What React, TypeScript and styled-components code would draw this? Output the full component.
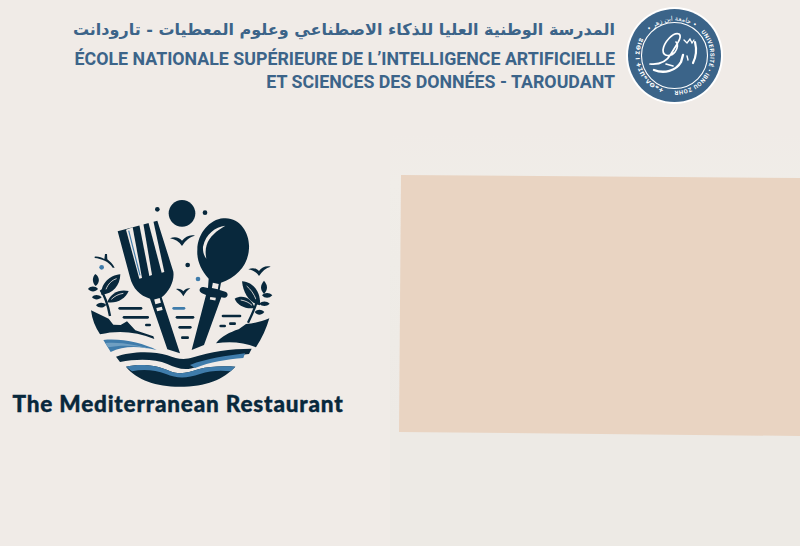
import React from "react";
import styled, { createGlobalStyle } from "styled-components";

const Global = createGlobalStyle`
  html, body { margin: 0; padding: 0; background: #f0ebe7; }
  #root { width: 800px; height: 546px; overflow: hidden; }
`;

const Page = styled.div`
  width: 800px;
  height: 546px;
  overflow: hidden;
  background: #f0ebe7;
  display: flex;
  flex-direction: column;
`;

const Header = styled.header`
  display: flex;
  justify-content: flex-end;
  align-items: flex-start;
  gap: 11px;
  padding: 7px 77px 0 0;
  height: 96px;
  box-sizing: border-box;
`;

const Titles = styled.div`
  display: flex;
  flex-direction: column;
  align-items: flex-end;
  padding-top: 9px;
  color: #3c6489;
`;

const ArabicTitle = styled.div`
  font-family: "DejaVu Sans", "Noto Sans", sans-serif;
  font-size: 16px;
  font-weight: 600;
  line-height: 28px;
  margin-bottom: 3px;
  direction: rtl;
  white-space: nowrap;
`;

const FrenchTitle = styled.div`
  font-family: "Roboto", "Open Sans", sans-serif;
  font-size: 17.8px;
  font-weight: 700;
  line-height: 23px;
  white-space: nowrap;
`;

const Body = styled.main`
  flex: 1;
  display: grid;
  grid-template-columns: 390px 410px;
`;

const BrandColumn = styled.section`
  display: flex;
  flex-direction: column;
  align-items: center;
  padding: 94px 30px 0 0;
`;

const BrandName = styled.div`
  font-family: "Lato", "Noto Sans", sans-serif;
  font-weight: 900;
  font-size: 22.5px;
  letter-spacing: 0.82px;
  line-height: 28px;
  margin-right: 4px;
  color: #08283c;
  white-space: nowrap;
  -webkit-text-stroke: 0.4px #08283c;
`;

const PeachColumn = styled.section`
  margin-top: 37px;
  padding: 42px 0 0 9px;
  background: linear-gradient(to bottom, #f0ebe7, #f0ede8 12%, #edeae5 70%);
`;

const PeachPanel = styled.div`
  width: 401px;
  height: 261px;
  background: #e9d4c2;
  clip-path: polygon(2px 0, 100% 3px, 100% 100%, 0 257px);
`;

const dark = "#08283c";
const blue = "#3f7cab";
const paper = "#f0ebe7";

function Logo() {
  return (
    <svg width="200" height="200" viewBox="0 0 600 600" aria-hidden="true">
      <circle cx="306" cy="70" r="40" fill={dark} />
      <circle cx="232" cy="58" r="7" fill={dark} />
      <circle cx="375" cy="68" r="7" fill={dark} />

      {/* fork */}
      <path
        d="M113 124 L232 92 L280 245 C284 272 268 305 245 322 L300 490 L262 478 L210 326 C180 318 158 295 150 262 Z"
        fill={dark}
      />
      <path d="M138 119 L158 112 L186 264 L178 266 Z" fill={paper} />
      <path d="M178 105 L190 101 L216 255 L208 258 Z" fill={paper} />
      <path d="M205 97 L220 93 L253 246 L245 248 Z" fill={paper} />
      <path d="M146 122 L180 256" stroke={blue} strokeWidth="3.5" fill="none" />
      <rect x="224" y="326" width="17" height="15" fill={paper} transform="rotate(-14 232 333)" />
      <rect x="230" y="352" width="17" height="10" fill={paper} transform="rotate(-14 238 357)" />

      {/* spoon */}
      <path
        d="M430 85 C480 80 510 130 507 175 C505 225 470 262 423 278 L419 300 L436 305 C447 309 444 324 432 323 L424 322 L372 465 L335 480 L378 315 L366 310 C354 305 358 290 370 291 L384 294 L386 266 C362 240 350 210 352 180 C352 130 390 88 430 85 Z"
        fill={dark}
      />
      <path d="M436 107 C405 112 378 130 369 170 C368 185 372 198 379 206 C376 190 376 178 380 165 C388 140 410 122 436 107 Z" fill={paper} />
      <rect x="397" y="280" width="18" height="16" fill={paper} transform="rotate(10 406 288)" />
      <rect x="390" y="322" width="17" height="8" fill={paper} transform="rotate(10 398 326)" />

      {/* birds and dots */}
      <path d="M270 145 C285 138 298 142 306 152 C316 140 330 133 345 137 C330 140 316 152 306 168 C298 155 285 148 270 145 Z" fill={dark} />
      <path d="M505 238 C518 232 530 235 537 243 C545 232 558 226 572 230 C557 234 547 243 537 258 C530 247 519 241 505 238 Z" fill={dark} />
      <path d="M288 297 C298 295 305 298 310 304 C316 297 323 293 331 295 C322 300 316 308 310 319 C305 309 298 302 288 297 Z" fill={dark} />
      <path d="M44 200 C55 199 65 202 73 207 L75 192 L81 192 L82 208 C90 214 98 222 104 233 L98 233 C92 224 84 216 74 212 C64 208 54 205 44 204 Z" fill={dark} />
      <circle cx="323" cy="225" r="7" fill={dark} />
      <circle cx="354" cy="267" r="7" fill={blue} />
      <circle cx="65" cy="232" r="7" fill={blue} />

      {/* left foliage */}
      <path d="M46 252 C60 262 60 278 47 288 C36 278 36 262 46 252 Z" fill={dark} />
      <path d="M24 297 C32 287 46 288 54 297 C46 307 32 307 24 297 Z" fill={dark} />
      <path d="M36 322 C42 313 56 313 65 322 C56 330 44 331 36 322 Z" fill={dark} />
      <path d="M48 346 C54 337 70 335 79 345 C70 355 56 355 48 346 Z" fill={dark} />
      <path d="M64 314 C62 282 88 256 121 253 C120 286 100 312 64 314 Z" fill={dark} />
      <path d="M78 298 C84 282 96 270 110 266" stroke={paper} strokeWidth="2.5" fill="none" />
      <path d="M82 337 C90 310 118 296 146 303 C136 326 112 341 82 337 Z" fill={dark} />
      <path d="M94 328 C104 318 116 312 130 310" stroke={paper} strokeWidth="2.5" fill="none" />
      <path d="M62 300 C76 320 84 345 90 378" stroke={dark} strokeWidth="7" fill="none" />
      <path d="M33 361 L86 386 L100 404 L122 405 L141 394 L166 421 L220 439 L223 447 C170 424 112 420 60 433 C46 412 36 388 33 361 Z" fill={dark} />

      {/* right foliage */}
      <path d="M552 272 C564 286 564 298 552 312 C540 298 540 286 552 272 Z" fill={dark} />
      <path d="M546 316 C554 307 568 307 577 316 C568 326 554 326 546 316 Z" fill={dark} />
      <path d="M538 341 C546 332 560 332 569 341 C560 350 546 350 538 341 Z" fill={dark} />
      <path d="M524 366 C532 357 544 357 553 366 C544 377 532 377 524 366 Z" fill={dark} />
      <path d="M540 346 C510 340 490 312 486 274 C520 276 543 306 540 346 Z" fill={dark} />
      <path d="M500 288 C512 298 522 312 528 328" stroke={paper} strokeWidth="2.5" fill="none" />
      <path d="M524 354 C496 358 472 346 464 326 C490 312 516 326 524 354 Z" fill={dark} />
      <path d="M482 330 C496 332 508 338 516 346" stroke={paper} strokeWidth="2.5" fill="none" />
      <path d="M504 398 C518 370 530 345 534 318" stroke={dark} strokeWidth="7" fill="none" />
      <path d="M568 385 C560 414 546 444 528 472 C490 456 448 454 408 460 C424 440 450 426 476 418 L498 402 C522 400 546 394 568 385 Z" fill={dark} />

      {/* ripple lines */}
      <g stroke={dark} strokeWidth="8" fill="none" strokeLinecap="round">
        <path d="M119 355 H183" />
        <path d="M132 382 H203" />
        <path d="M199 405 H209" />
        <path d="M291 382 H339" />
        <path d="M299 412 H331" />
        <path d="M307 443 H323" />
        <path d="M429 378 H480" />
        <path d="M422 408 H434" />
        <path d="M451 401 H464" />
      </g>
      <path d="M281 355 H312" stroke={blue} strokeWidth="8" strokeLinecap="round" />

      {/* waves */}
      <path d="M70 450 C125 444 190 460 230 480 C180 468 130 466 92 486 Z" fill={blue} />
      <path d="M76 459 C125 455 175 466 205 476 C165 466 125 464 84 472 Z" fill="#6f9fc2" />
      <path d="M108 500 C150 484 220 482 262 496 C290 506 310 512 340 502 C390 486 450 476 515 476 L507 492 C450 498 400 506 350 530 C318 544 290 535 262 522 C225 506 170 506 120 516 Z" fill={dark} />
      <path d="M330 525 C380 505 440 498 495 490 L490 504 C440 508 390 516 345 534 Z" fill={blue} />
      <path d="M138 530 C180 520 230 526 262 540 C295 556 320 550 355 538 C390 528 430 528 466 530 C430 568 380 590 298 590 C230 590 170 570 138 530 Z" fill={dark} />
      <path d="M138 530 C180 520 230 526 262 540 C295 556 320 550 355 538 C390 528 430 528 466 530 L452 544 C420 540 390 542 360 552 C320 566 290 566 258 552 C226 540 190 536 156 544 Z" fill={blue} />
    </svg>
  );
}

function UniversitySeal() {
  return (
    <svg width="97" height="97" viewBox="0 0 97 97" aria-label="Université Ibn Zohr">
      <circle cx="48.5" cy="48.5" r="48.5" fill="#ffffff" />
      <circle cx="48.5" cy="48.5" r="46.5" fill="#3b6489" />
      <circle cx="48.5" cy="48.5" r="33" fill="none" stroke="#fff" strokeWidth="1.1" />
      <defs>
        <path id="sealTop" d="M21 27 A35 35 0 0 1 72 22.5" />
        <path id="sealRight" d="M75 25 A35 35 0 0 1 42 83" />
        <path id="sealLeft" d="M38 82 A35 35 0 0 1 19 30" />
      </defs>
      <text fontFamily="DejaVu Sans, sans-serif" fontSize="6.4" fill="#fff">
        <textPath href="#sealTop" startOffset="50%" textAnchor="middle">• جامعة ابن زهر •</textPath>
      </text>
      <text fontFamily="Roboto, sans-serif" fontSize="5.8" fontWeight="700" fill="#fff" letterSpacing="0.45">
        <textPath href="#sealRight">UNIVERSITÉ • IBNOU ZOHR</textPath>
      </text>
      <text fontFamily="DejaVu Sans, sans-serif" fontSize="5.6" fontWeight="700" fill="#fff" letterSpacing="0.3">
        <textPath href="#sealLeft">ⵜⴰⵙⴷⴰⵡⵉⵜ ⵏ ⵉⴱⵏⵓ ⵣⵓⵀⵔ</textPath>
      </text>
      <g fill="none" stroke="#fff" strokeLinecap="round">
        <path d="M24 57 C34 58 41 54 45 47 C50 38 57 30 53 27 C47 25 38 35 37 43 C37 50 45 50 49 45 C52 41 52 37 50 35" strokeWidth="1.7" />
        <path d="M28 63 C38 67 50 64 55 55 L57 48" strokeWidth="2.4" />
        <path d="M40 57 L47 59" strokeWidth="1.6" />
        <path d="M69 35 C71 43 70 50 67 56" strokeWidth="2.2" />
        <path d="M58 33 L61 36 L64 32 L66 36 L68 33" strokeWidth="1.3" />
        <path d="M61 49 L62 53" strokeWidth="1.4" />
      </g>
    </svg>
  );
}

export default function App() {
  return (
    <Page>
      <Global />
      <Header>
        <Titles>
          <ArabicTitle>المدرسة الوطنية العليا للذكاء الاصطناعي وعلوم المعطيات - تارودانت</ArabicTitle>
          <FrenchTitle>ÉCOLE NATIONALE SUPÉRIEURE DE L’INTELLIGENCE ARTIFICIELLE</FrenchTitle>
          <FrenchTitle>ET SCIENCES DES DONNÉES - TAROUDANT</FrenchTitle>
        </Titles>
        <UniversitySeal />
      </Header>
      <Body>
        <BrandColumn>
          <Logo />
          <BrandName>The Mediterranean Restaurant</BrandName>
        </BrandColumn>
        <PeachColumn>
          <PeachPanel />
        </PeachColumn>
      </Body>
    </Page>
  );
}
